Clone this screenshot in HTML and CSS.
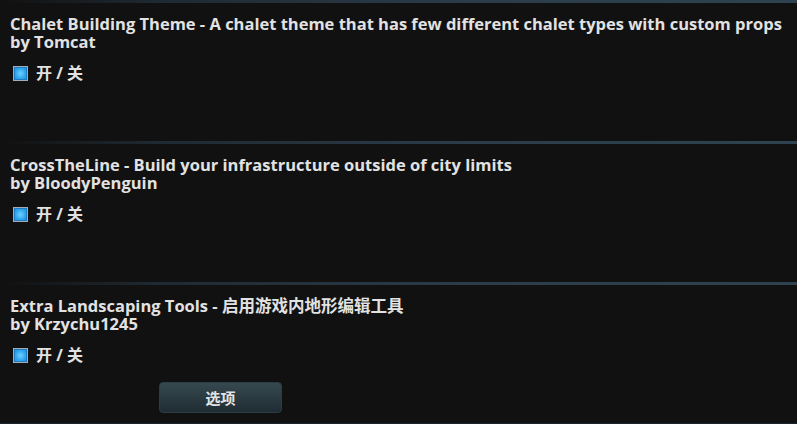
FILE: index.html
```html
<!DOCTYPE html>
<html lang="zh">
<head>
<meta charset="utf-8">
<link rel="stylesheet" href="styles.css">
</head>
<body>
<div class="list">
  <section class="mod">
    <div class="title">Chalet Building Theme - A chalet theme that has few different chalet types with custom props</div>
    <div class="author">by Tomcat</div>
    <label class="toggle"><span class="box"></span><span class="lbl">开 / 关</span></label>
  </section>
  <section class="mod">
    <div class="title">CrossTheLine - Build your infrastructure outside of city limits</div>
    <div class="author">by BloodyPenguin</div>
    <label class="toggle"><span class="box"></span><span class="lbl">开 / 关</span></label>
  </section>
  <section class="mod last">
    <div class="title">Extra Landscaping Tools - 启用游戏内地形编辑工具</div>
    <div class="author">by Krzychu1245</div>
    <label class="toggle"><span class="box"></span><span class="lbl">开 / 关</span></label>
    <div class="actions"><button class="btn">选项</button></div>
  </section>
</div>
</body>
</html>
```

FILE: styles.css
```css
html, body {
  margin: 0;
  padding: 0;
  background: #111111;
}
body {
  width: 797px;
  height: 424px;
  overflow: hidden;
  font-family: "Open Sans", "Noto Sans CJK SC", sans-serif;
  font-weight: 700;
  color: #e2e2e2;
}
.list {
  display: flex;
  flex-direction: column;
}
.mod {
  box-sizing: border-box;
  height: 141px;
  padding: 15px 10px 0 10px;
  background-image: linear-gradient(to right, rgba(50, 70, 85, 0) 0%, rgba(40, 58, 72, 0.6) 20%, #2b3d4b 60%, #2e4250 100%);
  background-size: 100% 3px;
  background-repeat: no-repeat;
  background-position: 0 0;
}
.mod.last {
  height: 142px;
  border-bottom: 1px solid #1c252b;
}
.title, .author {
  font-size: 16.5px;
  line-height: 18px;
  white-space: nowrap;
}
.toggle {
  display: flex;
  align-items: center;
  gap: 8px;
  margin-top: 13px;
  margin-left: 3px;
  height: 18px;
}
.box {
  width: 13px;
  height: 13px;
  border: 1px solid #a4adb5;
  background: radial-gradient(circle at 50% 50%, #6fd0ff 0%, #2ea6f0 55%, #1a84d2 100%);
  box-shadow: inset 0 0 0 1px #1f7cc0;
}
.lbl {
  font-size: 16px;
  line-height: 18px;
}
.actions {
  margin-top: 18px;
  padding-left: 149px;
}
.btn {
  width: 123px;
  height: 31px;
  border: 1px solid #2d3d45;
  border-radius: 4px;
  background: linear-gradient(to bottom, #36494f 0%, #2b3b42 50%, #1f2c33 100%);
  color: #e4e4e4;
  font-family: "Open Sans", "Noto Sans CJK SC", sans-serif;
  font-weight: 700;
  font-size: 15px;
  padding: 0;
}
```
